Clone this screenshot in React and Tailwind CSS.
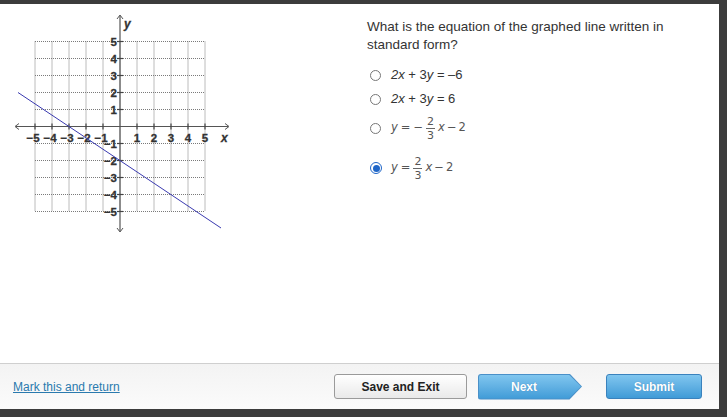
import React from 'react';

const UNIT = 17;
const OX = 120;
const OY = 126.5;
const ticks = [-5, -4, -3, -2, -1, 1, 2, 3, 4, 5];

const Graph = () => {
    const gx = (v) => OX + v * UNIT;
    const gy = (v) => OY - v * UNIT;
    const lines = [-5, -4, -3, -2, -1, 0, 1, 2, 3, 4, 5];

    return (
        <svg width="240" height="236" viewBox="0 4 240 236" className="block shrink-0">
            {/* dotted grid */}
            {lines.map((v) => (
                <g key={v}>
                    <line x1={gx(v)} y1={gy(5)} x2={gx(v)} y2={gy(-5)} stroke="#7a7a7a" strokeWidth="1" strokeDasharray="1 1" />
                    <line x1={gx(-5)} y1={gy(v)} x2={gx(5)} y2={gy(v)} stroke="#7a7a7a" strokeWidth="1" strokeDasharray="1 1" />
                </g>
            ))}

            {/* axes */}
            <line x1="16" y1={OY} x2="228" y2={OY} stroke="#555" strokeWidth="1.2" />
            <line x1={OX} y1="16" x2={OX} y2="231" stroke="#555" strokeWidth="1.2" />
            <path d="M19 123.5 L15 126.5 L19 129.5" fill="none" stroke="#555" strokeWidth="1" />
            <path d="M225 123.5 L229 126.5 L225 129.5" fill="none" stroke="#555" strokeWidth="1" />
            <path d="M117 19 L120 15 L123 19" fill="none" stroke="#555" strokeWidth="1" />
            <path d="M117 228 L120 232 L123 228" fill="none" stroke="#555" strokeWidth="1" />

            {ticks.map((v) => (
                <g key={'t' + v}>
                    <line x1={gx(v)} y1={OY - 3} x2={gx(v)} y2={OY + 3} stroke="#444" strokeWidth="1.2" />
                    <line x1={OX - 3} y1={gy(v)} x2={OX + 3} y2={gy(v)} stroke="#444" strokeWidth="1.2" />
                </g>
            ))}

            {/* labels */}
            <g fontFamily="'Liberation Sans', Arial, sans-serif" fontSize="11.5" fontWeight="bold" fill="#333" stroke="#333" strokeWidth="0.3">
                {ticks.map((v) => (
                    <text key={'x' + v} x={gx(v) - (v < 0 ? 2 : 0)} y={OY + 15} textAnchor="middle">
                        {v < 0 ? '\u2212' + Math.abs(v) : v}
                    </text>
                ))}
                {ticks.map((v) => (
                    <text key={'y' + v} x={OX - 3} y={gy(v) + 4} textAnchor="end">
                        {v < 0 ? '\u2212' + Math.abs(v) : v}
                    </text>
                ))}
                <text x="124" y="28" fontStyle="italic" fontSize="12">y</text>
                <text x="221" y="142" fontStyle="italic" fontSize="12">x</text>
            </g>

            {/* graphed line */}
            <line x1="18" y1="92.5" x2="221" y2="228" stroke="#3a3ab0" strokeWidth="1" />
        </svg>
    );
};

const Radio = ({ checked }) => (
    <span
        className={
            checked
                ? 'w-[12px] h-[12px] rounded-full border border-[#1f66c8] bg-white flex items-center justify-center shrink-0'
                : 'w-[11px] h-[11px] rounded-full border border-[#777] bg-white shrink-0'
        }
    >
        {checked && <span className="w-[7px] h-[7px] rounded-full bg-[#1f66c8]" />}
    </span>
);

const Frac = () => (
    <span className="inline-flex flex-col items-center leading-none mx-[3px] text-[11px]">
        <span className="px-[1px] pb-[1px]">2</span>
        <span className="w-[9px] border-t border-[#666]" />
        <span className="pt-[1px]">3</span>
    </span>
);

const MathOption = ({ negative }) => (
    <span className="flex items-center text-[11.5px] text-[#555] font-['DejaVu_Sans','Liberation_Sans',sans-serif]">
        <i>y</i>
        <span className="ml-[3px]">=</span>
        {negative && <span className="ml-[3px]">−</span>}
        <Frac />
        <i>x</i>
        <span className="ml-[2px]">−</span>
        <span className="ml-[2px]">2</span>
    </span>
);

const App = () => {
    const btnText = 'text-[12px] font-bold font-["Liberation_Sans",Arial,sans-serif]';

    return (
        <div className="w-[727px] h-[417px] bg-[#3c3c3c] pt-[4px] pr-[8px] pb-[8px] font-['Liberation_Sans',Arial,sans-serif]">
            <div className="w-full h-full bg-white flex flex-col">
                <div className="flex-1 flex">
                    <Graph />

                    {/* question */}
                    <div className="ml-[127px] pt-[14px] w-[330px]">
                        <p className="text-[13.5px] leading-[18px] text-[#333]">
                            What is the equation of the graphed line written in standard form?
                        </p>

                        <div className="mt-[9px] pl-[3px]">
                            <div className="h-[24px] flex items-center gap-[10px] text-[13px] text-[#333]">
                                <Radio />
                                <span><i>2x</i>&nbsp;+ 3<i>y</i> = –6</span>
                            </div>
                            <div className="h-[24px] flex items-center gap-[10px] text-[13px] text-[#333]">
                                <Radio />
                                <span><i>2x</i>&nbsp;+ 3<i>y</i> = 6</span>
                            </div>
                            <div className="h-[34px] flex items-center gap-[10px]">
                                <Radio />
                                <MathOption negative />
                            </div>
                            <div className="mt-[6px] h-[34px] flex items-center gap-[9px]">
                                <Radio checked />
                                <MathOption />
                            </div>
                        </div>
                    </div>
                </div>

                {/* footer */}
                <div className="h-[46px] border-t border-[#cfcfcf] bg-gradient-to-b from-[#f3f3f3] to-[#fbfbfb] flex items-center pl-[13px] pr-[17px]">
                    <a href="#" className="text-[12px] text-[#2a7aae] underline">Mark this and return</a>

                    <div className="ml-auto flex items-center">
                        <button className={'w-[133px] h-[25px] rounded-[3px] border border-[#9a9a9a] bg-gradient-to-b from-white to-[#e9e9e9] text-[#222] ' + btnText}>
                            Save and Exit
                        </button>

                        <div className="ml-[11px] w-[104px] h-[26px] bg-[#4a90c8] [clip-path:polygon(0_0,88%_0,100%_50%,88%_100%,0_100%)] p-[1px] rounded-l-[3px]">
                            <div className={'w-full h-full bg-gradient-to-b from-[#80c6ef] to-[#3f9bd7] [clip-path:polygon(0_0,88%_0,100%_50%,88%_100%,0_100%)] rounded-l-[2px] flex items-center justify-center pr-[12px] text-white [text-shadow:0_0_1px_#3a7fb3] ' + btnText}>
                                Next
                            </div>
                        </div>

                        <button className={'ml-[24px] w-[96px] h-[25px] rounded-[3px] border border-[#3a82bd] bg-gradient-to-b from-[#80c6ef] to-[#3f9bd7] text-white [text-shadow:0_0_1px_#3a7fb3] ' + btnText}>
                            Submit
                        </button>
                    </div>
                </div>
            </div>
        </div>
    );
};

export default App;
